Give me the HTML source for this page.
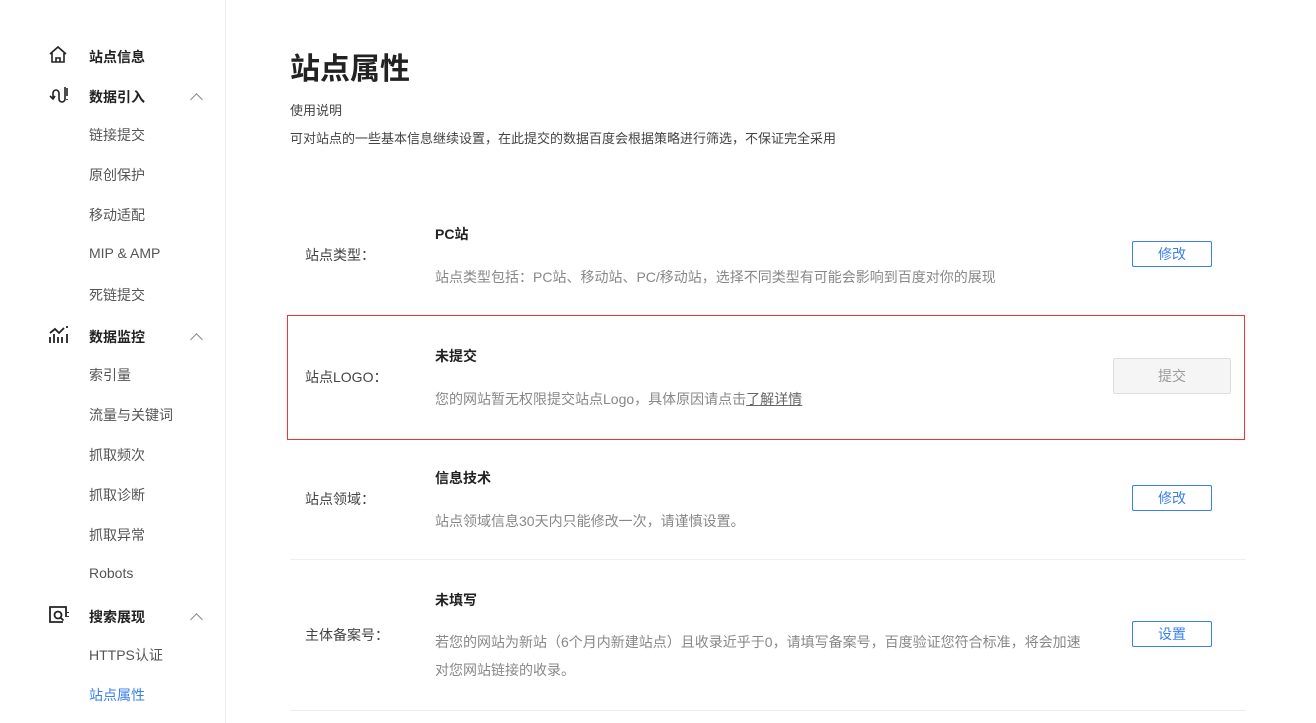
<!DOCTYPE html><html><head><meta charset="utf-8"><style>
*{margin:0;padding:0;box-sizing:border-box}
body{width:1316px;height:723px;overflow:hidden;background:#fff;font-family:"Liberation Sans","Noto Sans CJK SC",sans-serif;position:relative;color:#333}
.a{position:absolute;white-space:nowrap}
.side{position:absolute;left:0;top:0;width:226px;height:723px;border-right:1px solid #eee}
.g{font-size:14px;font-weight:bold;color:#222}
.s{font-size:14px;color:#555}
.chev{position:absolute;left:192px;width:9px;height:9px;border-left:1.5px solid #888;border-top:1.5px solid #888;transform:rotate(45deg)}
.lbl{font-size:14px;color:#444}
.t{font-size:14px;font-weight:bold;color:#222}
.d{font-size:14px;color:#888}
.btn{position:absolute;border:1px solid #3a7ff0;color:#3a7ff0;font-size:14px;text-align:center;border-radius:2px}
.sep{position:absolute;left:290px;width:956px;height:1px;background:#eee}
</style></head><body>
<div class="side">
<svg class="a" style="left:48px;top:45px" width="20" height="20" viewBox="0 0 20 20" fill="none" stroke="#222" stroke-width="1.6"><path d="M2 9L10 2l8 7M4 8v9h12V8M8 17v-4h4v4"/></svg>
<div class="a g" style="left:89px;top:47px">站点信息</div>
<svg class="a" style="left:48px;top:84px" width="22" height="22" viewBox="0 0 22 22" fill="none" stroke="#222" stroke-width="1.6"><path d="M2 12l3 3 2-3M5 15V9a3 3 0 0 1 6 0v6a3 3 0 0 0 6 0V3M19 4v8M19 15v1"/></svg>
<div class="a g" style="left:89px;top:87px">数据引入</div><div class="chev" style="top:95px"></div>
<div class="a s" style="left:89px;top:125px">链接提交</div>
<div class="a s" style="left:89px;top:165px">原创保护</div>
<div class="a s" style="left:89px;top:205px">移动适配</div>
<div class="a s" style="left:89px;top:245px">MIP &amp; AMP</div>
<div class="a s" style="left:89px;top:285px">死链提交</div>
<svg class="a" style="left:48px;top:325px" width="22" height="20" viewBox="0 0 22 20" fill="none" stroke="#222" stroke-width="1.8"><path d="M2 18v-6M6 18V9M10 18v-6M14 18v-6M19 18v-9M2 8l5-4 4 4 5-5M19 1v2"/></svg>
<div class="a g" style="left:89px;top:327px">数据监控</div><div class="chev" style="top:335px"></div>
<div class="a s" style="left:89px;top:365px">索引量</div>
<div class="a s" style="left:89px;top:405px">流量与关键词</div>
<div class="a s" style="left:89px;top:445px">抓取频次</div>
<div class="a s" style="left:89px;top:485px">抓取诊断</div>
<div class="a s" style="left:89px;top:525px">抓取异常</div>
<div class="a s" style="left:89px;top:565px">Robots</div>
<svg class="a" style="left:48px;top:604px" width="22" height="22" viewBox="0 0 22 22" fill="none" stroke="#222" stroke-width="1.8"><path d="M15 18H2V3h16v10"/><circle cx="10" cy="11" r="3.5"/><path d="M12.5 13.5l3 3M20 8v1M20 12v1"/></svg>
<div class="a g" style="left:89px;top:607px">搜索展现</div><div class="chev" style="top:615px"></div>
<div class="a s" style="left:89px;top:645px">HTTPS认证</div>
<div class="a s" style="left:89px;top:685px;color:#3a7ff0">站点属性</div>
</div>
<div class="a" style="left:290px;top:44px;font-size:30px;font-weight:bold;color:#222">站点属性</div>
<div class="a" style="left:290px;top:100px;font-size:13px;color:#444">使用说明</div>
<div class="a" style="left:290px;top:128px;font-size:13px;color:#444">可对站点的一些基本信息继续设置，在此提交的数据百度会根据策略进行筛选，不保证完全采用</div>

<div class="a lbl" style="left:305px;top:245px">站点类型：</div>
<div class="a t" style="left:435px;top:224px">PC站</div>
<div class="a d" style="left:435px;top:267px">站点类型包括：PC站、移动站、PC/移动站，选择不同类型有可能会影响到百度对你的展现</div>
<div class="btn" style="left:1132px;top:241px;width:80px;height:26px;line-height:24px">修改</div>

<div class="a" style="left:287px;top:315px;width:958px;height:125px;border:1px solid #e33"></div>
<div class="a lbl" style="left:305px;top:367px">站点LOGO：</div>
<div class="a t" style="left:435px;top:346px">未提交</div>
<div class="a d" style="left:435px;top:389px">您的网站暂无权限提交站点Logo，具体原因请点击<span style="color:#666;text-decoration:underline">了解详情</span></div>
<div class="btn" style="left:1113px;top:358px;width:118px;height:36px;line-height:34px;border-color:#ddd;background:#f5f5f5;color:#999">提交</div>

<div class="a lbl" style="left:305px;top:489px">站点领域：</div>
<div class="a t" style="left:435px;top:468px">信息技术</div>
<div class="a d" style="left:435px;top:511px">站点领域信息30天内只能修改一次，请谨慎设置。</div>
<div class="btn" style="left:1132px;top:485px;width:80px;height:26px;line-height:24px">修改</div>
<div class="sep" style="top:559px"></div>

<div class="a lbl" style="left:305px;top:625px">主体备案号：</div>
<div class="a t" style="left:435px;top:590px">未填写</div>
<div class="a d" style="left:435px;top:632px">若您的网站为新站（6个月内新建站点）且收录近乎于0，请填写备案号，百度验证您符合标准，将会加速</div>
<div class="a d" style="left:435px;top:660px">对您网站链接的收录。</div>
<div class="btn" style="left:1132px;top:621px;width:80px;height:26px;line-height:24px">设置</div>
<div class="sep" style="top:710px"></div>
</body></html>
